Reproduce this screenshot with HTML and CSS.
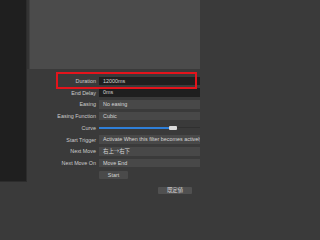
FILE: index.html
```html
<!DOCTYPE html>
<html>
<head>
<meta charset="utf-8">
<link rel="stylesheet" href="styles.css">
</head>
<body>
<div class="app">
  <aside class="sources"></aside>
  <main class="props">
    <div class="preview"></div>
    <div class="form">
      <label class="lbl">Duration</label>
      <div class="field input">12000ms</div>
      <label class="lbl">End Delay</label>
      <div class="field input">0ms</div>
      <label class="lbl">Easing</label>
      <div class="field combo">No easing</div>
      <label class="lbl">Easing Function</label>
      <div class="field combo">Cubic</div>
      <label class="lbl">Curve</label>
      <div class="slider"><span class="fill"></span><span class="handle"></span><span class="rest"></span></div>
      <label class="lbl">Start Trigger</label>
      <div class="field combo">Activate When this filter becomes actively</div>
      <label class="lbl">Next Move</label>
      <div class="field combo cjk">右上→右下</div>
      <label class="lbl">Next Move On</label>
      <div class="field combo">Move End</div>
      <span class="lbl"></span>
      <div class="btnwrap"><button class="btn start">Start</button></div>
    </div>
    <div class="footer"><button class="btn defaults cjk">既定値</button></div>
  </main>
  <div class="highlight"></div>
</div>
</body>
</html>
```
FILE: styles.css
```css
html, body {
  margin: 0;
  padding: 0;
  background: #3a3a3a;
}
.app {
  position: relative;
  display: flex;
  width: 200px;
  height: 200px;
  overflow: hidden;
  font-family: "Liberation Sans", "Noto Sans CJK JP", sans-serif;
  font-size: 5.4px;
  color: #d0d0d0;
}
.sources {
  flex: none;
  width: 26px;
  height: 181px;
  background: #1f1f1f;
  border-right: 1px solid #2c2c2c;
  border-bottom: 1px solid #2c2c2c;
}
.props {
  flex: 1;
  display: flex;
  flex-direction: column;
  min-width: 0;
}
.preview {
  flex: none;
  height: 69px;
  background: #4b4b4b;
  border-left: 2px solid #333333;
  box-shadow: inset 1px 0 0 #3f3f3f;
}
.form {
  display: grid;
  grid-template-columns: 69px 130px;
  column-gap: 3px;
  grid-auto-rows: 11.75px;
  align-items: center;
  padding-top: 6px;
}
.lbl {
  text-align: right;
  white-space: nowrap;
  color: #cccccc;
}
.field {
  height: 8.5px;
  line-height: 8.5px;
  padding-left: 4px;
  white-space: nowrap;
  overflow: hidden;
  color: #d6d6d6;
}
.input {
  background: #1f1f1f;
}
.combo {
  background: #484848;
}
.cjk {
  font-family: "Noto Sans CJK JP", "Liberation Sans", sans-serif;
}
.slider {
  display: flex;
  align-items: center;
  height: 6px;
}
.fill {
  width: 70px;
  height: 1.5px;
  background: #2f7fd8;
}
.handle {
  width: 8px;
  height: 4.5px;
  background: #dadada;
  border-radius: 1px;
}
.rest {
  flex: 1;
  height: 1px;
  background: #303030;
}
.btnwrap {
  display: flex;
  align-items: center;
}
.btn {
  margin: 0;
  padding: 0;
  border: none;
  font: inherit;
  color: #d6d6d6;
  background: #4a4a4a;
  border-radius: 1px;
}
.start {
  width: 29px;
  height: 8px;
  line-height: 8px;
}
.footer {
  display: flex;
  justify-content: flex-end;
  padding-top: 6px;
  padding-right: 8px;
}
.defaults {
  width: 34px;
  height: 7.5px;
  line-height: 7.5px;
  background: #505050;
}
.highlight {
  position: absolute;
  left: 56px;
  top: 72px;
  width: 141px;
  height: 17px;
  box-sizing: border-box;
  border: 2px solid #e3141c;
}
```
